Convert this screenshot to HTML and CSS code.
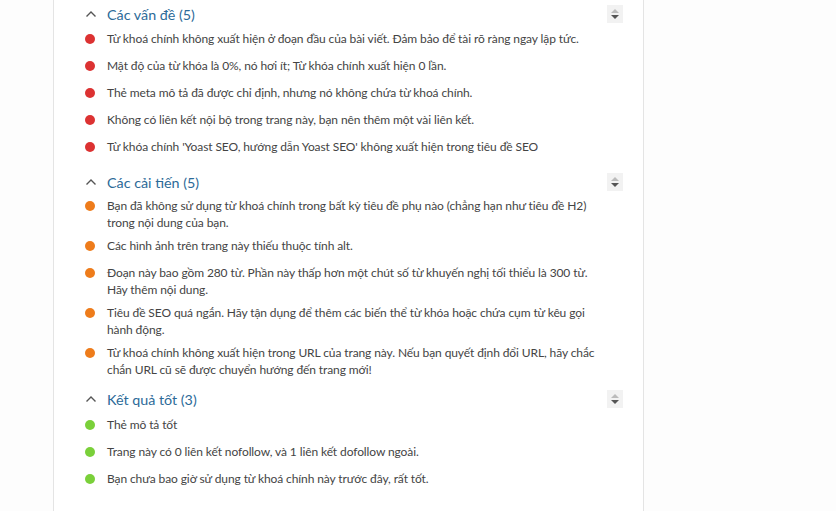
FILE: index.html
```html
<!DOCTYPE html>
<html lang="vi">
<head>
<meta charset="utf-8">
<link rel="stylesheet" href="styles.css">
</head>
<body>
<div class="panel">
  <section class="group problems">
    <div class="group-head">
      <svg class="chev" width="12" height="8" viewBox="0 0 12 8"><path d="M1.5 6.5 L6 2 L10.5 6.5" fill="none" stroke="#555" stroke-width="1.4"/></svg>
      <h3 class="group-title">Các vấn đề (5)</h3>
      <span class="sort"><i class="up"></i><i class="down"></i></span>
    </div>
    <ul class="results">
      <li><span class="dot red"></span><span class="txt">Từ khoá chính không xuất hiện ở đoạn đầu của bài viết. Đảm bảo để tài rõ ràng ngay lập tức.</span></li>
      <li><span class="dot red"></span><span class="txt">Mật độ của từ khóa là 0%, nó hơi ít; Từ khóa chính xuất hiện 0 lần.</span></li>
      <li><span class="dot red"></span><span class="txt">Thẻ meta mô tả đã được chỉ định, nhưng nó không chứa từ khoá chính.</span></li>
      <li><span class="dot red"></span><span class="txt">Không có liên kết nội bộ trong trang này, bạn nên thêm một vài liên kết.</span></li>
      <li><span class="dot red"></span><span class="txt">Từ khóa chính 'Yoast SEO, hướng dẫn Yoast SEO' không xuất hiện trong tiêu đề SEO</span></li>
    </ul>
  </section>
  <section class="group improvements">
    <div class="group-head">
      <svg class="chev" width="12" height="8" viewBox="0 0 12 8"><path d="M1.5 6.5 L6 2 L10.5 6.5" fill="none" stroke="#555" stroke-width="1.4"/></svg>
      <h3 class="group-title">Các cải tiến (5)</h3>
      <span class="sort"><i class="up"></i><i class="down"></i></span>
    </div>
    <ul class="results">
      <li><span class="dot orange"></span><span class="txt">Bạn đã không sử dụng từ khoá chính trong bất kỳ tiêu đề phụ nào (chẳng hạn như tiêu đề H2) trong nội dung của bạn.</span></li>
      <li><span class="dot orange"></span><span class="txt">Các hình ảnh trên trang này thiếu thuộc tính alt.</span></li>
      <li><span class="dot orange"></span><span class="txt">Đoạn này bao gồm 280 từ. Phần này thấp hơn một chút số từ khuyến nghị tối thiểu là 300 từ. Hãy thêm nội dung.</span></li>
      <li><span class="dot orange"></span><span class="txt">Tiêu đề SEO quá ngắn. Hãy tận dụng để thêm các biến thể từ khóa hoặc chứa cụm từ kêu gọi hành động.</span></li>
      <li><span class="dot orange"></span><span class="txt">Từ khoá chính không xuất hiện trong URL của trang này. Nếu bạn quyết định đổi URL, hãy chắc chắn URL cũ sẽ được chuyển hướng đến trang mới!</span></li>
    </ul>
  </section>
  <section class="group good">
    <div class="group-head">
      <svg class="chev" width="12" height="8" viewBox="0 0 12 8"><path d="M1.5 6.5 L6 2 L10.5 6.5" fill="none" stroke="#555" stroke-width="1.4"/></svg>
      <h3 class="group-title">Kết quả tốt (3)</h3>
      <span class="sort"><i class="up"></i><i class="down"></i></span>
    </div>
    <ul class="results">
      <li><span class="dot green"></span><span class="txt">Thẻ mô tả tốt</span></li>
      <li><span class="dot green"></span><span class="txt">Trang này có 0 liên kết nofollow, và 1 liên kết dofollow ngoài.</span></li>
      <li><span class="dot green"></span><span class="txt">Bạn chưa bao giờ sử dụng từ khoá chính này trước đây, rất tốt.</span></li>
    </ul>
  </section>
</div>
</body>
</html>
```
FILE: styles.css
```css
html, body {
  margin: 0;
  padding: 0;
  background: #fdfdfd;
}
body {
  font-family: Lato, "Noto Sans", sans-serif;
  color: #444;
  height: 511px;
  overflow: hidden;
}
.panel {
  margin-left: 53px;
  width: 591px;
  height: 511px;
  background: #fff;
  border-left: 1px solid #e4e4e4;
  border-right: 1px solid #e4e4e4;
  padding: 4px 0 0 30px;
  box-sizing: border-box;
}
.group-head {
  display: flex;
  align-items: center;
  height: 20px;
}
.chev {
  margin-left: 1px;
  margin-right: 10px;
}
.group-title {
  margin: 0;
  font-weight: normal;
  font-size: 14.3px;
  color: #2c6a98;
  flex: 1;
}
.sort {
  width: 16px;
  height: 18px;
  background: #f2f2f2;
  margin-right: 20px;
  display: flex;
  flex-direction: column;
  align-items: center;
  justify-content: center;
  gap: 2px;
}
.sort i {
  width: 0;
  height: 0;
  border-left: 4px solid transparent;
  border-right: 4px solid transparent;
}
.sort .up { border-bottom: 4px solid #bbb; }
.sort .down { border-top: 4px solid #555; }
.results {
  list-style: none;
  margin: 6px 0 0;
  padding: 0;
  width: 515px;
}
.results li {
  display: flex;
  align-items: flex-start;
  min-height: 21px;
  margin-bottom: 6px;
  font-size: 12px;
  letter-spacing: -0.1px;
  line-height: 17px;
}
.dot {
  flex: none;
  width: 10px;
  height: 10px;
  border-radius: 50%;
  margin: 3.5px 12px 0 1px;
}
.red { background: #dc3232; }
.orange { background: #ee7c1b; }
.green { background: #7ad03a; }
.txt { flex: 1; }
.improvements { margin-top: 13px; }
.improvements .results { margin-top: 5px; }
.good { margin-top: 11px; }
.good .results { margin-top: 7px; }
```
